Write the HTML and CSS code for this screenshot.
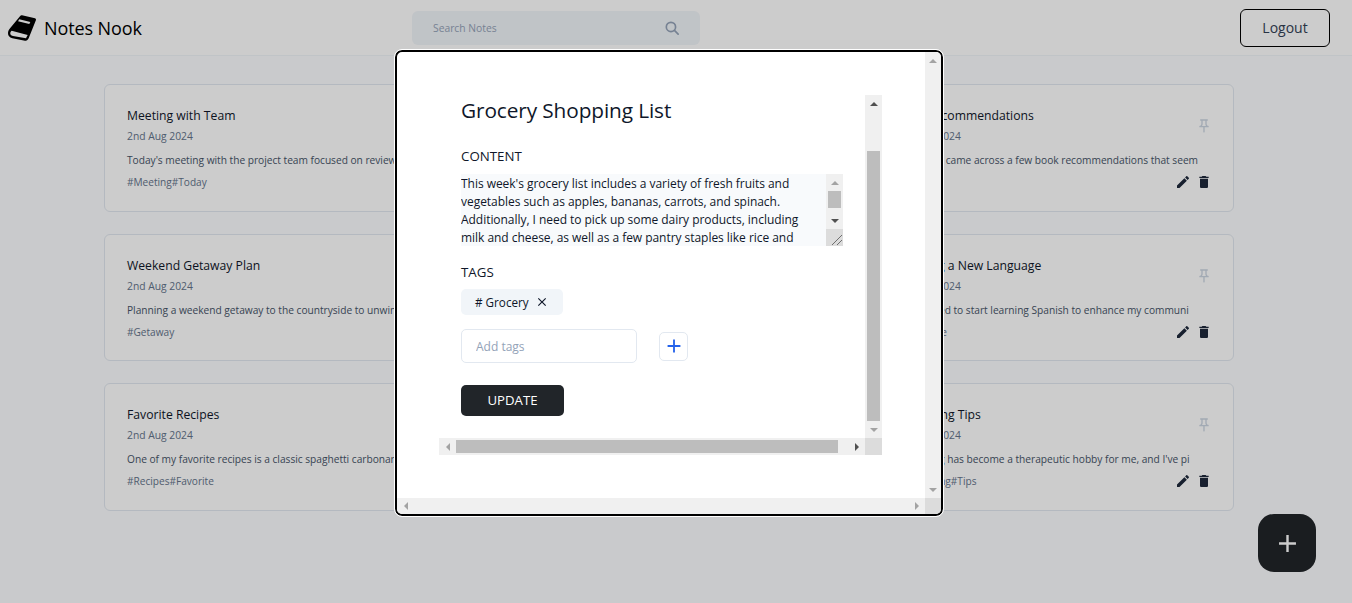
FILE: index.html
```html
<!DOCTYPE html>
<html lang="en">
<head>
<meta charset="utf-8">
<title>Notes Nook</title>
<link rel="stylesheet" href="styles.css">
</head>
<body>
<header class="nav">
  <div class="brand">
    <svg class="brand-icon" viewBox="0 0 84 78"><path d="M42 1 81 10C84 11 85 14 83 17L62 70C59 76 56 78 51 77L13 70C4 68 0 62 0 55 0 49 2 45 5 41L36 4C38 1 40 0 42 1Z" fill="#000"/><path d="M11 47 59 60 54 70 15 63C8 61 6 57 7 53 8 50 9 48 11 47Z" fill="#fff"/><path d="M34 13 67 21 64 27 30 19Z" fill="#fff"/></svg>
    <span class="brand-name">Notes Nook</span>
  </div>
  <div class="search">
    <input class="search-input" placeholder="Search Notes">
    <svg class="search-icon" viewBox="0 0 16 16"><circle cx="6.800" cy="6.800" r="5.300"/><path d="M10.800 10.800 15 15"/></svg>
  </div>
  <button class="logout">Logout</button>
</header>

<main class="grid">
  <article class="card"><div class="card-top"><div><h3 class="card-title">Meeting with Team</h3><p class="card-date">2nd Aug 2024</p></div><svg class="pin" viewBox="0 0 24 24"><use href="#i-pin"/></svg></div><p class="card-text">Today's meeting with the project team focused on reviewing t</p><div class="card-foot"><span class="card-tags">#Meeting#Today</span><span class="card-actions"><svg viewBox="0 0 24 24"><use href="#i-edit"/></svg><svg viewBox="0 0 24 24"><use href="#i-del"/></svg></span></div></article>
  <article class="card"><div class="card-top"><div><h3 class="card-title">Grocery Shopping List</h3><p class="card-date">2nd Aug 2024</p></div><svg class="pin" viewBox="0 0 24 24"><use href="#i-pin"/></svg></div><p class="card-text">This week's grocery list includes a variety of fresh fruits</p><div class="card-foot"><span class="card-tags">#Grocery</span><span class="card-actions"><svg viewBox="0 0 24 24"><use href="#i-edit"/></svg><svg viewBox="0 0 24 24"><use href="#i-del"/></svg></span></div></article>
  <article class="card"><div class="card-top"><div><h3 class="card-title">Book Recommendations</h3><p class="card-date">2nd Aug 2024</p></div><svg class="pin" viewBox="0 0 24 24"><use href="#i-pin"/></svg></div><p class="card-text">Recently, I came across a few book recommendations that seem</p><div class="card-foot"><span class="card-tags">#Books</span><span class="card-actions"><svg viewBox="0 0 24 24"><use href="#i-edit"/></svg><svg viewBox="0 0 24 24"><use href="#i-del"/></svg></span></div></article>
  <article class="card"><div class="card-top"><div><h3 class="card-title">Weekend Getaway Plan</h3><p class="card-date">2nd Aug 2024</p></div><svg class="pin" viewBox="0 0 24 24"><use href="#i-pin"/></svg></div><p class="card-text">Planning a weekend getaway to the countryside to unwind and</p><div class="card-foot"><span class="card-tags">#Getaway</span><span class="card-actions"><svg viewBox="0 0 24 24"><use href="#i-edit"/></svg><svg viewBox="0 0 24 24"><use href="#i-del"/></svg></span></div></article>
  <article class="card"><div class="card-top"><div><h3 class="card-title">Home Workout Routine</h3><p class="card-date">2nd Aug 2024</p></div><svg class="pin" viewBox="0 0 24 24"><use href="#i-pin"/></svg></div><p class="card-text">My new home workout routine starts with a short warm up</p><div class="card-foot"><span class="card-tags">#Fitness</span><span class="card-actions"><svg viewBox="0 0 24 24"><use href="#i-edit"/></svg><svg viewBox="0 0 24 24"><use href="#i-del"/></svg></span></div></article>
  <article class="card"><div class="card-top"><div><h3 class="card-title">Learning a New Language</h3><p class="card-date">2nd Aug 2024</p></div><svg class="pin" viewBox="0 0 24 24"><use href="#i-pin"/></svg></div><p class="card-text">I've decided to start learning Spanish to enhance my communi</p><div class="card-foot"><span class="card-tags">#Language</span><span class="card-actions"><svg viewBox="0 0 24 24"><use href="#i-edit"/></svg><svg viewBox="0 0 24 24"><use href="#i-del"/></svg></span></div></article>
  <article class="card"><div class="card-top"><div><h3 class="card-title">Favorite Recipes</h3><p class="card-date">2nd Aug 2024</p></div><svg class="pin" viewBox="0 0 24 24"><use href="#i-pin"/></svg></div><p class="card-text">One of my favorite recipes is a classic spaghetti carbonara m</p><div class="card-foot"><span class="card-tags">#Recipes#Favorite</span><span class="card-actions"><svg viewBox="0 0 24 24"><use href="#i-edit"/></svg><svg viewBox="0 0 24 24"><use href="#i-del"/></svg></span></div></article>
  <article class="card"><div class="card-top"><div><h3 class="card-title">Budget Planning</h3><p class="card-date">2nd Aug 2024</p></div><svg class="pin" viewBox="0 0 24 24"><use href="#i-pin"/></svg></div><p class="card-text">Budget planning helps me keep track of my monthly spending</p><div class="card-foot"><span class="card-tags">#Money</span><span class="card-actions"><svg viewBox="0 0 24 24"><use href="#i-edit"/></svg><svg viewBox="0 0 24 24"><use href="#i-del"/></svg></span></div></article>
  <article class="card"><div class="card-top"><div><h3 class="card-title">Gardening Tips</h3><p class="card-date">2nd Aug 2024</p></div><svg class="pin" viewBox="0 0 24 24"><use href="#i-pin"/></svg></div><p class="card-text">Gardening has become a therapeutic hobby for me, and I've pi</p><div class="card-foot"><span class="card-tags">#Gardening#Tips</span><span class="card-actions"><svg viewBox="0 0 24 24"><use href="#i-edit"/></svg><svg viewBox="0 0 24 24"><use href="#i-del"/></svg></span></div></article>
</main>

<button class="fab" aria-label="Add note"><svg viewBox="0 0 24 24"><use href="#i-add"/></svg></button>

<div class="overlay">
  <section class="modal">
    <div class="modal-view">
      <div class="editor">
        <div class="editor-view">
          <div class="editor-body">
            <h2 class="editor-title">Grocery Shopping List</h2>
            <label class="field-label">CONTENT</label>
            <div class="text-wrap">
              <textarea class="editor-text" readonly>This week's grocery list includes a variety of fresh fruits and vegetables such as apples, bananas, carrots, and spinach. Additionally, I need to pick up some dairy products, including milk and cheese, as well as a few pantry staples like rice and pasta.</textarea>
              <div class="sb sb-v">
                <span class="sb-btn"><i class="arrow up off"></i></span>
                <span class="sb-track"><span class="sb-thumb text-thumb"></span></span>
                <span class="sb-btn"><i class="arrow down"></i></span>
                <span class="resizer"><svg viewBox="0 0 17 17"><path d="M6 16 16 6M11 16 16 11"/></svg></span>
              </div>
            </div>
            <label class="field-label tags-label">TAGS</label>
            <div class="tag-row"><span class="tag"># Grocery<svg viewBox="0 0 24 24"><use href="#i-close"/></svg></span></div>
            <div class="add-row">
              <input class="tag-input" placeholder="Add tags">
              <button class="tag-add" aria-label="Add tag"><svg viewBox="0 0 24 24"><use href="#i-add"/></svg></button>
            </div>
            <button class="update">UPDATE</button>
          </div>
        </div>
        <div class="sb sb-v">
          <span class="sb-btn"><i class="arrow up"></i></span>
          <span class="sb-track end"><span class="sb-thumb editor-vthumb"></span></span>
          <span class="sb-btn"><i class="arrow down off"></i></span>
        </div>
        <div class="sb sb-h">
          <span class="sb-btn"><i class="arrow left off"></i></span>
          <span class="sb-track"><span class="sb-thumb editor-hthumb"></span></span>
          <span class="sb-btn"><i class="arrow right"></i></span>
        </div>
        <div class="sb-corner"></div>
      </div>
    </div>
    <div class="sb sb-v">
      <span class="sb-btn"><i class="arrow up off"></i></span>
      <span class="sb-track"></span>
      <span class="sb-btn"><i class="arrow down off"></i></span>
    </div>
    <div class="sb sb-h">
      <span class="sb-btn"><i class="arrow left off"></i></span>
      <span class="sb-track"></span>
      <span class="sb-btn"><i class="arrow right off"></i></span>
    </div>
    <div class="sb-corner"></div>
  </section>
</div>

<svg class="defs" aria-hidden="true">
  <symbol id="i-pin" viewBox="0 0 24 24"><path d="M14 4v5c0 1.120.370 2.160 1 3H9c.650-.860 1-1.900 1-3V4h4m3-2H7c-.550 0-1 .450-1 1s.450 1 1 1h1v5c0 1.660-1.340 3-3 3v2h5.970v7l1 1 1-1v-7H19v-2c-1.660 0-3-1.340-3-3V4h1c.550 0 1-.450 1-1s-.450-1-1-1z"/></symbol>
  <symbol id="i-edit" viewBox="0 0 24 24"><path d="M3 17.250V21h3.750L17.810 9.940l-3.750-3.750L3 17.250zM20.710 7.040c.390-.390.390-1.020 0-1.410l-2.340-2.340c-.390-.390-1.020-.390-1.410 0l-1.830 1.830 3.750 3.750 1.830-1.830z"/></symbol>
  <symbol id="i-del" viewBox="0 0 24 24"><path d="M6 19c0 1.100.900 2 2 2h8c1.100 0 2-.900 2-2V7H6v12zM19 4h-3.500l-1-1h-5l-1 1H5v2h14V4z"/></symbol>
  <symbol id="i-add" viewBox="0 0 24 24"><path d="M19 13h-6v6h-2v-6H5v-2h6V5h2v6h6v2z"/></symbol>
  <symbol id="i-close" viewBox="0 0 24 24"><path d="M19 6.410 17.590 5 12 10.590 6.410 5 5 6.410 10.590 12 5 17.590 6.410 19 12 13.410 17.590 19 19 17.590 13.410 12 19 6.410z"/></symbol>
</svg>
</body>
</html>
```
FILE: styles.css
```css
* { box-sizing: border-box; }
html, body { margin: 0; height: 100%; overflow: hidden; }
body { font-family: "Open Sans", "Noto Sans", sans-serif; background: #fcfdff; color: #1e293b; }
button, input, textarea { font-family: inherit; }
.defs { display: none; }

.nav { height: 56px; background: #fff; border-bottom: 1px solid #f1f5f9; display: grid; grid-template-columns: 404px 288px 1fr; align-items: center; padding: 0 22px 0 8px; }
.brand { display: flex; align-items: center; gap: 8px; }
.brand-icon { width: 28px; height: 26px; }
.brand-name { font-size: 18px; font-weight: 500; color: #000; letter-spacing: -.1px; }
.search { height: 34px; background: #f1f5f9; border-radius: 6px; display: flex; align-items: center; justify-content: space-between; padding: 0 21px; }
.search-input { flex: 1; min-width: 0; border: 0; outline: 0; background: none; padding: 0; font-size: 10.300px; color: #1e293b; }
.search-input::placeholder { color: #94a3b8; opacity: 1; }
.search-icon { width: 14px; height: 14px; fill: none; stroke: #94a3b8; stroke-width: 1.900; stroke-linecap: round; }
.logout { justify-self: end; width: 90px; height: 38px; background: #fff; border: 1px solid #000; border-radius: 6px; font-size: 14px; color: #334155; padding: 0; }

.grid { display: grid; grid-template-columns: repeat(3, 362px); grid-auto-rows: 127.500px; gap: 22px; padding: 28px 0 0 104px; }
.card { background: #fff; border: 1px solid #e2e8f0; border-radius: 6px; padding: 22px 21px 0 22px; }
.card-top { display: flex; justify-content: space-between; align-items: center; }
.card-title { margin: 0; font-size: 12.200px; font-weight: 500; color: #0f172a; line-height: 18px; }
.card-date { margin: 2px 0 0; font-size: 10.300px; color: #64748b; line-height: 18px; }
.pin { width: 16px; height: 16px; fill: #cbd5e1; }
.card-text { margin: 6px 0 0; font-size: 10.200px; letter-spacing: -.02px; color: #475569; line-height: 18px; white-space: nowrap; }
.card-foot { display: flex; justify-content: space-between; align-items: center; margin-top: 4px; }
.card-tags { font-size: 10.100px; color: #64748b; line-height: 18px; }
.card-actions { display: flex; gap: 5px; }
.card-actions svg { width: 16px; height: 16px; fill: #1e293b; }

.fab { position: fixed; left: 1258px; top: 514px; width: 58px; height: 58px; border: 0; border-radius: 16px; background: #212529; padding: 0; display: flex; align-items: center; justify-content: center; }
.fab svg { width: 29px; height: 29px; fill: #fff; }

.overlay { position: fixed; inset: 0; background: rgba(0,0,0,.2); }
.modal { position: absolute; left: 395px; top: 50px; width: 548px; height: 466px; background: #fff; border: 2px solid #000; border-radius: 7px; outline: 1px solid #fff; overflow: hidden; display: grid; grid-template-columns: 1fr 16px; grid-template-rows: 1fr 16px; }
.modal-view { min-width: 0; min-height: 0; padding: 43px 0 0 42px; }
.editor { width: 443px; height: 360px; display: grid; grid-template-columns: 1fr 17px; grid-template-rows: 1fr 17px; }
.editor-view { min-width: 0; min-height: 0; overflow: hidden; }
.editor-body { padding-left: 22px; }
.editor-title { margin: 0; font-size: 20.800px; font-weight: 400; letter-spacing: -.1px; color: #0f172a; line-height: 30px; }
.field-label { display: block; margin-top: 22px; font-size: 13.300px; color: #0f172a; line-height: 18px; }
.text-wrap { display: flex; width: 382px; height: 72px; margin-top: 9px; }
.editor-text { display: block; flex: 1; min-width: 0; height: 72px; margin: 0; padding: 1px 14px 0 0; border: 0; outline: 0; resize: none; overflow: hidden; background: #f8fafc; font-size: 12px; line-height: 18px; letter-spacing: -.04px; color: #0f172a; }
.tags-label { margin-top: 17px; }
.tag-row { margin-top: 8px; display: flex; }
.tag { display: inline-flex; align-items: center; height: 26px; padding: 0 14px; background: #f1f5f9; border-radius: 5px; font-size: 11.700px; color: #0f172a; gap: 6px; white-space: pre; }
.tag svg { width: 14px; height: 14px; fill: #0f172a; }
.add-row { display: flex; align-items: center; gap: 22px; margin-top: 14px; }
.tag-input { width: 176px; height: 34px; border: 1px solid #e2e8f0; border-radius: 5px; padding: 0 14px; font-size: 12px; color: #0f172a; outline: 0; background: #fff; }
.tag-input::placeholder { color: #94a3b8; opacity: 1; }
.tag-add { width: 29px; height: 29px; border: 1px solid #e2e8f0; border-radius: 5px; background: #fff; padding: 0; display: flex; align-items: center; justify-content: center; }
.tag-add svg { width: 22px; height: 22px; fill: #2563eb; }
.update { display: block; width: 103px; height: 31px; margin-top: 22px; border: 0; border-radius: 5px; background: #212529; color: #fff; font-size: 13.200px; padding: 0 0 2px; }

.sb { display: flex; background: #f0f0f0; }
.sb-v { flex-direction: column; }
.sb-h { flex-direction: row; }
.sb-btn { flex: none; width: 100%; height: 17px; display: flex; align-items: center; justify-content: center; }
.sb-h .sb-btn { width: 17px; height: 100%; }
.sb-track { flex: 1; min-width: 0; min-height: 0; display: flex; padding: 0 2px; }
.sb-h .sb-track { padding: 2px 0; }
.sb-track.end { align-items: flex-end; }
.sb-thumb { display: block; background: #bdbdbd; width: 100%; }
.text-thumb { height: 17px; }
.editor-vthumb { height: 270px; }
.editor-hthumb { width: 382px; height: 100%; }
.sb-corner, .resizer { background: #dcdcdc; }
.resizer { flex: none; height: 17px; display: block; }
.resizer svg { display: block; width: 17px; height: 17px; fill: none; stroke: #6f6f6f; stroke-width: 1; }
.arrow { display: block; width: 0; height: 0; border-style: solid; border-color: transparent; --c: #505050; }
.arrow.off { --c: #a3a3a3; }
.arrow.up { border-width: 0 4px 4.500px; border-bottom-color: var(--c); }
.arrow.down { border-width: 4.500px 4px 0; border-top-color: var(--c); }
.arrow.left { border-width: 4px 4.500px 4px 0; border-right-color: var(--c); }
.arrow.right { border-width: 4px 0 4px 4.500px; border-left-color: var(--c); }
```
